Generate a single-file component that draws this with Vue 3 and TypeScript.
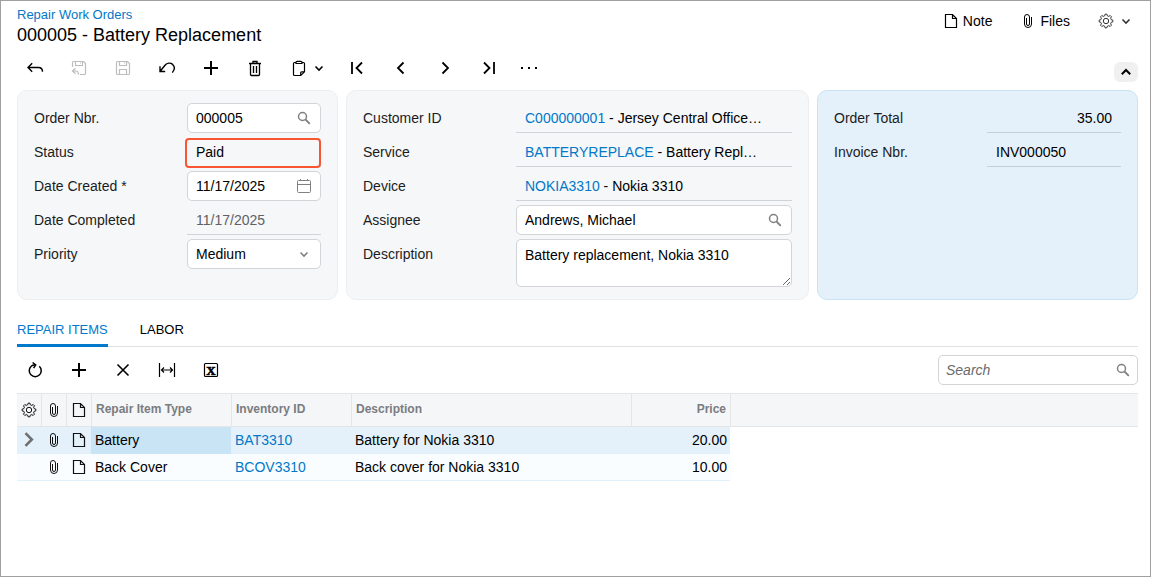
<script setup lang="ts">
import { h, ref } from 'vue'
import type { FunctionalComponent } from 'vue'

const chevronLeft = 'M12.5 4.5 7 10l5.5 5.5'
const chevronRight = 'M7.5 4.5 13 10l-5.5 5.5'

/** Outline of a cog with the given number of teeth, centred on 10,10. */
function cog(teeth: number, outer: number, inner: number): string {
  const step = (Math.PI * 2) / teeth
  const points: string[] = []
  for (let i = 0; i < teeth; i++) {
    const parts: [number, number][] = [[-0.3, inner], [-0.17, outer], [0.17, outer], [0.3, inner]]
    for (const [offset, radius] of parts) {
      const angle = (i + offset) * step
      points.push(`${(10 + radius * Math.cos(angle)).toFixed(2)} ${(10 + radius * Math.sin(angle)).toFixed(2)}`)
    }
  }
  return `M${points.join('L')}z`
}

const glyphs: Record<string, string> = {
  back: '<path stroke-width="1.4" d="M7.2 5.3 3 9.5l4.2 4.2M3 9.5h10.5c2.6 0 4 1.3 4 4.3"/>',
  saveClose: '<path stroke-width="1.2" d="M3.5 9V4.5a1 1 0 0 1 1-1h10l2 2v10a1 1 0 0 1-1 1H11M6.5 3.5v4h7v-4M6.5 10.2 3.5 13l3 2.8M3.5 13h3.2c1.8 0 2.8 1 2.8 3.8M11 5h1"/>',
  save: '<path stroke-width="1.2" d="M4.5 3.5h10l2 2v10a1 1 0 0 1-1 1h-11a1 1 0 0 1-1-1v-11a1 1 0 0 1 1-1zM6.5 3.5v4h7v-4M6.5 16.5v-5h7v5M11 5h1"/>',
  undo: '<path stroke-width="1.4" d="M3 8.3v5.200h5.200M3 13.500l5-6.200c2-2.500 5.300-2.900 7.600-.9 2.300 2.200 2.200 5.400-.3 8.200"/>',
  plus: '<path stroke-width="2" d="M10 3v14M3 10h14"/>',
  trash: '<path stroke-width="1.3" d="M4 5.5h12M8 5.500v-2h4v2M5.5 5.500v11a1 1 0 0 0 1 1h7a1 1 0 0 0 1-1v-11M8.500 8v7M11.500 8v7"/>',
  clipboard: '<path stroke-width="1.200" d="M7 4.500H5.500a1 1 0 0 0-1 1v11a1 1 0 0 0 1 1h6.300l3.700-3.700V5.500a1 1 0 0 0-1-1H13M11.700 17.500v-2.700a1 1 0 0 1 1-1h2.800M7 5.500V4.300c0-.7.6-1 1.200-1h3.600c.6 0 1.200.3 1.200 1v1.200z"/>',
  caret: '<path stroke-width="1.600" d="M6.500 8.500 10 12l3.500-3.500"/>',
  caretUp: '<path stroke-width="2" d="M5.800 12.200 10 8l4.200 4.200"/>',
  first: '<path stroke-width="1.800" d="M5 4v12M15 4.500 9.500 10l5.500 5.500"/>',
  prev: `<path stroke-width="1.800" d="${chevronLeft}"/>`,
  next: `<path stroke-width="1.800" d="${chevronRight}"/>`,
  last: '<path stroke-width="1.800" d="M15 4v12M5 4.500 10.500 10 5 15.500"/>',
  more: '<path fill="currentColor" stroke="none" d="M2 9h2v2H2zM9 9h2v2H9zM16 9h2v2h-2z"/>',
  note: '<path stroke-width="1.200" d="M4.500 3.500h7l4 4v9h-11zM11.500 3.500v4h4"/>',
  clip: '<path d="M8.500 7v6a1.500 1.500 0 0 0 3 0V6a2.500 2.500 0 0 0-5 0v7a3.500 3.500 0 0 0 7 0V6"/>',
  gear: `<path d="${cog(8, 6.9, 5.4)}"/><circle cx="10" cy="10" r="2.700"/>`,
  search: '<circle stroke-width="1.500" cx="8.500" cy="8.500" r="4"/><path stroke-width="1.800" d="m11.500 11.500 4.300 4.300"/>',
  calendar: '<path d="M4.500 4.500h11a1 1 0 0 1 1 1v10a1 1 0 0 1-1 1h-11a1 1 0 0 1-1-1v-10a1 1 0 0 1 1-1zM3.500 8.500h13M6.500 3v2M13.500 3v2"/>',
  refresh: '<path stroke-width="1.500" d="M14.300 6.200A6 6 0 1 1 6.200 6.200C7.200 5.300 8.600 4.900 10.400 5"/><path stroke-width="1.500" d="M7.600 2.500 10.700 5 8.600 8.200"/>',
  cross: '<path stroke-width="1.600" d="m4.500 4.500 11 11m0-11-11 11"/>',
  fit: '<path stroke-width="1.200" d="M2.500 3v14M17.500 3v14M4.500 10h11M7 7.500 4.500 10 7 12.500M13 7.500l2.500 2.500-2.500 2.500"/>',
  excel: '<rect x="3.500" y="3.500" width="13" height="13" rx="1" stroke-width="1.200"/><text x="10" y="14.500" text-anchor="middle" fill="currentColor" stroke-width=".6">X</text>',
  marker: '<path stroke-width="2.600" d="M6.500 3.200 12.800 9.500l-6.300 6.300"/>',
}

const Icon: FunctionalComponent<{ name: string }> = (props) =>
  h('svg', {
    class: 'icon',
    width: 20,
    height: 20,
    viewBox: '0 0 20 20',
    fill: 'none',
    stroke: 'currentColor',
    'aria-hidden': 'true',
    innerHTML: glyphs[props.name],
  })
Icon.props = ['name']

interface Tool { icon: string; label: string; disabled?: boolean; menu?: boolean }

const formTools: Tool[] = [
  { icon: 'back', label: 'Back' },
  { icon: 'saveClose', label: 'Save and close', disabled: true },
  { icon: 'save', label: 'Save', disabled: true },
  { icon: 'undo', label: 'Cancel' },
  { icon: 'plus', label: 'Add new record' },
  { icon: 'trash', label: 'Delete' },
  { icon: 'clipboard', label: 'Clipboard', menu: true },
  { icon: 'first', label: 'First record' },
  { icon: 'prev', label: 'Previous record' },
  { icon: 'next', label: 'Next record' },
  { icon: 'last', label: 'Last record' },
  { icon: 'more', label: 'More' },
]

const gridTools: Tool[] = [
  { icon: 'refresh', label: 'Refresh' },
  { icon: 'plus', label: 'Add row' },
  { icon: 'cross', label: 'Delete row' },
  { icon: 'fit', label: 'Fit to screen' },
  { icon: 'excel', label: 'Export to Excel' },
]

const references = [
  { id: 'customer', label: 'Customer ID', code: 'C000000001', text: 'Jersey Central Office…' },
  { id: 'service', label: 'Service', code: 'BATTERYREPLACE', text: 'Battery Repl…' },
  { id: 'device', label: 'Device', code: 'NOKIA3310', text: 'Nokia 3310' },
]

const items = [
  { type: 'Battery', inventory: 'BAT3310', description: 'Battery for Nokia 3310', price: '20.00' },
  { type: 'Back Cover', inventory: 'BCOV3310', description: 'Back cover for Nokia 3310', price: '10.00' },
]

const orderNbr = ref('000005')
const dateCreated = ref('11/17/2025')
const priority = ref('Medium')
const assignee = ref('Andrews, Michael')
const description = ref('Battery replacement, Nokia 3310')
const query = ref('')
const tab = ref('REPAIR ITEMS')
const selected = ref(0)
</script>

<template>
  <main class="page">
    <header class="head">
      <div>
        <a class="crumb" href="#">Repair Work Orders</a>
        <h1>000005 - Battery Replacement</h1>
      </div>
      <div class="actions">
        <button type="button"><Icon name="note" />Note</button>
        <button type="button"><Icon name="clip" />Files</button>
        <button type="button" class="settings" aria-label="Settings"><Icon name="gear" /><Icon name="caret" /></button>
      </div>
    </header>

    <div class="toolbar">
      <button
        v-for="t in formTools"
        :key="t.icon"
        type="button"
        class="tool"
        :class="{ menu: t.menu, narrow: t.icon === 'more' }"
        :disabled="t.disabled"
        :aria-label="t.label"
      >
        <Icon :name="t.icon" /><Icon v-if="t.menu" name="caret" />
      </button>
      <button type="button" class="collapse" aria-label="Collapse"><Icon name="caretUp" /></button>
    </div>

    <section class="panels">
      <div class="panel">
        <div class="row">
          <label for="order">Order Nbr.</label>
          <div class="box"><input id="order" v-model="orderNbr" type="text"><button type="button" aria-label="Find order"><Icon name="search" /></button></div>
        </div>
        <div class="row">
          <label for="status">Status</label>
          <output id="status" class="value marked">Paid</output>
        </div>
        <div class="row">
          <label for="created">Date Created *</label>
          <div class="box"><input id="created" v-model="dateCreated" type="text"><button type="button" aria-label="Open calendar"><Icon name="calendar" /></button></div>
        </div>
        <div class="row">
          <label for="completed">Date Completed</label>
          <output id="completed" class="value muted">11/17/2025</output>
        </div>
        <div class="row">
          <label for="priority">Priority</label>
          <div class="box select">
            <select id="priority" v-model="priority"><option>Low</option><option>Medium</option><option>High</option></select>
            <Icon name="caret" />
          </div>
        </div>
      </div>

      <div class="panel">
        <div v-for="r in references" :key="r.id" class="row">
          <label :for="r.id">{{ r.label }}</label>
          <output :id="r.id" class="value"><span><a href="#">{{ r.code }}</a> - {{ r.text }}</span></output>
        </div>
        <div class="row">
          <label for="assignee">Assignee</label>
          <div class="box"><input id="assignee" v-model="assignee" type="text"><button type="button" aria-label="Find assignee"><Icon name="search" /></button></div>
        </div>
        <div class="row">
          <label for="description">Description</label>
          <textarea id="description" v-model="description" rows="2"></textarea>
        </div>
      </div>

      <div class="panel totals">
        <div class="row">
          <label for="total">Order Total</label>
          <output id="total" class="value number">35.00</output>
        </div>
        <div class="row">
          <label for="invoice">Invoice Nbr.</label>
          <output id="invoice" class="value">INV000050</output>
        </div>
      </div>
    </section>

    <nav class="tabs" role="tablist">
      <button
        v-for="name in ['REPAIR ITEMS', 'LABOR']"
        :key="name"
        type="button"
        role="tab"
        :aria-selected="tab === name"
        :class="{ active: tab === name }"
        @click="tab = name"
      >{{ name }}</button>
    </nav>

    <div class="gridbar">
      <button v-for="t in gridTools" :key="t.icon" type="button" class="tool" :aria-label="t.label"><Icon :name="t.icon" /></button>
      <div class="box search">
        <input v-model="query" type="text" placeholder="Search" aria-label="Search">
        <button type="button" aria-label="Run search"><Icon name="search" /></button>
      </div>
    </div>

    <table>
      <colgroup>
        <col class="c-mark"><col class="c-icon"><col class="c-icon"><col class="c-type"><col class="c-inv"><col class="c-desc"><col class="c-price"><col>
      </colgroup>
      <thead>
        <tr>
          <th class="pic"><Icon name="gear" /></th>
          <th class="pic"><Icon name="clip" /></th>
          <th class="pic"><Icon name="note" /></th>
          <th>Repair Item Type</th>
          <th>Inventory ID</th>
          <th>Description</th>
          <th class="price">Price</th>
          <th></th>
        </tr>
      </thead>
      <tbody>
        <tr v-for="(item, i) in items" :key="item.inventory" :class="{ current: i === selected }" @click="selected = i">
          <td class="mark"><Icon v-if="i === selected" name="marker" /></td>
          <td class="pic"><Icon name="clip" /></td>
          <td class="pic"><Icon name="note" /></td>
          <td class="type">{{ item.type }}</td>
          <td><a href="#">{{ item.inventory }}</a></td>
          <td>{{ item.description }}</td>
          <td class="price">{{ item.price }}</td>
          <td class="rest"></td>
        </tr>
      </tbody>
    </table>
  </main>
</template>

<style>
body {
  margin: 0;
  background: #fff;
}
</style>

<style scoped>
* {
  box-sizing: border-box;
}

.page {
  min-height: 100vh;
  padding: 4px 12px 16px 16px;
  border: 1px solid #a0a0a0;
  font: 14px/16px "Liberation Sans", Arial, sans-serif;
  color: #000;
}

a {
  color: #0278c8;
  text-decoration: none;
}

button,
input,
select,
textarea {
  margin: 0;
  padding: 0;
  border: 0;
  background: none;
  font: inherit;
  color: inherit;
  outline: none;
}

.icon {
  display: block;
  flex: none;
}

.icon :deep(text) {
  font: bold 13px "Liberation Serif", "Times New Roman", serif;
}

.head {
  display: flex;
  justify-content: space-between;
  align-items: flex-start;
  height: 49px;
}

.crumb {
  display: block;
  padding-top: 1px;
  font-size: 13px;
  line-height: 18px;
}

h1 {
  margin: 0;
  font-size: 18px;
  font-weight: normal;
  line-height: 22px;
}

.actions {
  display: flex;
  gap: 26px;
  padding: 6px 2px 0 0;
}

.actions button {
  display: flex;
  align-items: center;
  gap: 2px;
  height: 20px;
}

.actions .settings {
  gap: 0;
  color: #333;
}

.toolbar,
.gridbar {
  display: flex;
  align-items: center;
  gap: 8px;
}

.toolbar {
  height: 28px;
}

.tool {
  display: flex;
  align-items: center;
  justify-content: center;
  width: 36px;
  height: 28px;
}

.tool.menu {
  width: 56px;
  margin-right: -6px;
}

.tool.narrow {
  width: 28px;
}

.tool:disabled {
  color: #bdbdbd;
}

.collapse {
  display: flex;
  align-items: center;
  justify-content: center;
  align-self: flex-end;
  width: 24px;
  height: 20px;
  margin-left: auto;
  border-radius: 6px;
  background: #f0f0f0;
}

.panels {
  display: grid;
  grid-template-columns: 321fr 463fr 321fr;
  gap: 8px;
  margin-top: 8px;
}

.panel {
  display: flex;
  flex-direction: column;
  gap: 4px;
  min-width: 0;
  padding: 12px 16px;
  border: 1px solid #eceef0;
  border-radius: 10px;
  background: #f5f7f9;
}

.totals {
  border-color: #c9e4f5;
  background: #e4f1fa;
}

.row {
  display: grid;
  grid-template-columns: 153px minmax(0, 1fr);
}

label {
  line-height: 30px;
  color: #1c1c1c;
}

.box {
  display: flex;
  align-items: center;
  height: 30px;
  padding: 0 6px 0 8px;
  border: 1px solid #d2d4d8;
  border-radius: 5px;
  background: #fff;
  color: #000;
}

.box input,
.box select {
  flex: 1;
  min-width: 0;
  height: 28px;
  appearance: none;
}

.box button,
.box > .icon {
  color: #808080;
}

.value {
  display: flex;
  align-items: center;
  height: 30px;
  padding: 1px 9px 0;
  border-bottom: 1px solid #d0d3d7;
  white-space: nowrap;
}

.totals .value {
  border-color: #c3d0d9;
}

.value.number {
  justify-content: flex-end;
}

.value.muted {
  color: #5f6166;
}

.value.marked {
  position: relative;
}

.marked::after {
  content: "";
  position: absolute;
  inset: 1px 0 -2px -2px;
  border: 2px solid #fa5533;
  border-radius: 4px;
}

textarea {
  display: block;
  width: 100%;
  padding: 7px 8px;
  border: 1px solid #d2d4d8;
  border-radius: 5px;
  background: #fff;
  overflow: hidden;
  resize: vertical;
}

.tabs {
  display: flex;
  gap: 32px;
  margin-top: 12px;
  border-bottom: 1px solid #dfe1e3;
}

.tabs button {
  height: 35px;
  margin-bottom: -1px;
  padding-top: 4px;
  border-bottom: 3px solid transparent;
  font-size: 13px;
}

.tabs button.active {
  border-bottom-color: #027acc;
  border-radius: 2px 2px 0 0;
  color: #027acc;
}

.gridbar {
  height: 46px;
}

.search {
  width: 200px;
  margin-left: auto;
  padding: 0 4px 0 7px;
}

.search input::placeholder {
  font-style: italic;
  color: #6b6b6b;
  opacity: 1;
}

table {
  width: 100%;
  table-layout: fixed;
  border-collapse: separate;
  border-spacing: 0;
}

.c-mark { width: 24px; }
.c-icon { width: 25px; }
.c-type { width: 140px; }
.c-inv { width: 120px; }
.c-desc { width: 280px; }
.c-price { width: 99px; }

th {
  height: 34px;
  padding: 0 4px 2px;
  border: solid #e3e5e7;
  border-width: 1px 0 1px 1px;
  background: #f5f6f8;
  font-size: 12px;
  text-align: left;
  color: #7a7c80;
}

th:first-child {
  border-left: 0;
}

td {
  height: 27px;
  padding: 0 3px 0 4px;
  border-bottom: 1px solid #dff1fb;
  background: #f9fdff;
  white-space: nowrap;
}

.current td {
  border-color: #e4f1fa;
  background: #e4f1fa;
}

.current .type {
  border-color: #c9e4f4;
  background: #c9e4f4;
}

th.pic {
  padding: 0 2px;
  color: #111;
}

td.pic {
  padding: 0 2px 0 3px;
  color: #111;
}

td.mark {
  padding: 0 2px;
  color: #707070;
}

.price {
  text-align: right;
}

td.rest,
.current td.rest {
  border-color: transparent;
  background: none;
}
</style>
